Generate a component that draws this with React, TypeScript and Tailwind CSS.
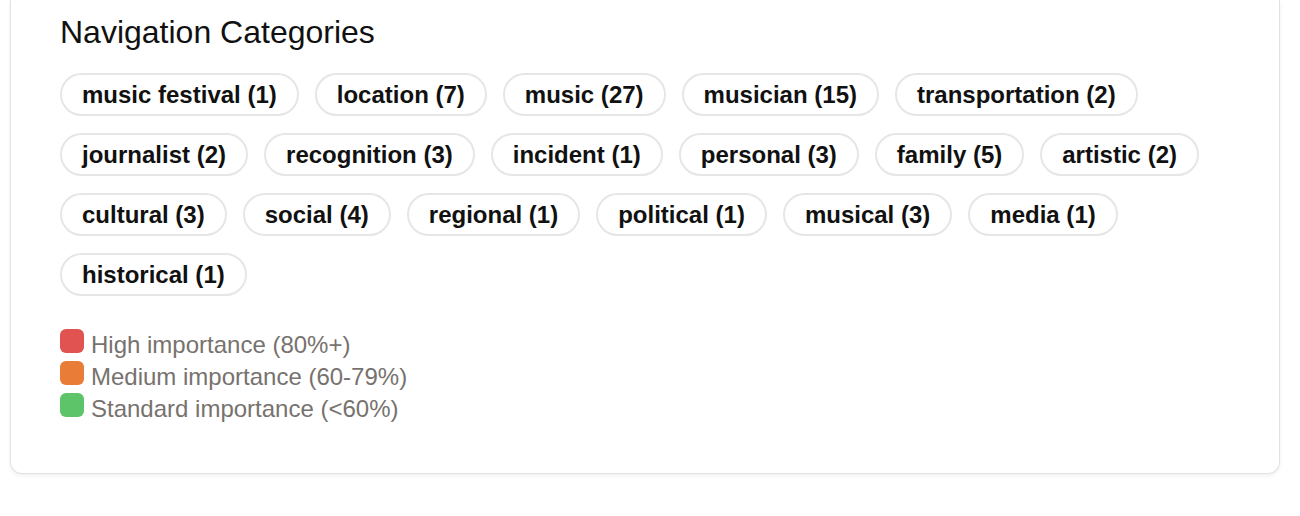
import React from "react";

const categories: [string, number][] = [
  ["music festival", 1],
  ["location", 7],
  ["music", 27],
  ["musician", 15],
  ["transportation", 2],
  ["journalist", 2],
  ["recognition", 3],
  ["incident", 1],
  ["personal", 3],
  ["family", 5],
  ["artistic", 2],
  ["cultural", 3],
  ["social", 4],
  ["regional", 1],
  ["political", 1],
  ["musical", 3],
  ["media", 1],
  ["historical", 1],
];

const legend = [
  { color: "bg-[#e05350]", label: "High importance (80%+)" },
  { color: "bg-[#e97c37]", label: "Medium importance (60-79%)" },
  { color: "bg-[#5ec46a]", label: "Standard importance (<60%)" },
];

export default function App() {
  return (
    <div className="min-h-screen bg-white pl-[10px] pr-[20px] font-['Liberation_Sans',Arial,sans-serif]">
      <section className="rounded-b-xl border-x border-b border-[#e2e2e2] bg-white px-[49px] pt-[13px] pb-12 shadow-[0_2px_4px_rgba(0,0,0,0.06)]">
        <h2 className="text-[32px] leading-[38px] text-[#111]">Navigation Categories</h2>

        <div className="mt-[22px] flex flex-wrap gap-x-4 gap-y-[17px]">
          {categories.map(([name, count]) => (
            <span
              key={name}
              className="flex h-[43px] items-center rounded-full border-2 border-[#e6e6e6] px-5 text-[24px] font-bold text-[#111]"
            >
              {name} ({count})
            </span>
          ))}
        </div>

        <ul className="mt-[33px]">
          {legend.map((l) => (
            <li key={l.label} className="flex items-start gap-[7px] text-[24px] leading-[32px] text-[#77726e]">
              <span className={`h-6 w-6 shrink-0 rounded-md ${l.color}`} />
              {l.label}
            </li>
          ))}
        </ul>
      </section>
    </div>
  );
}
